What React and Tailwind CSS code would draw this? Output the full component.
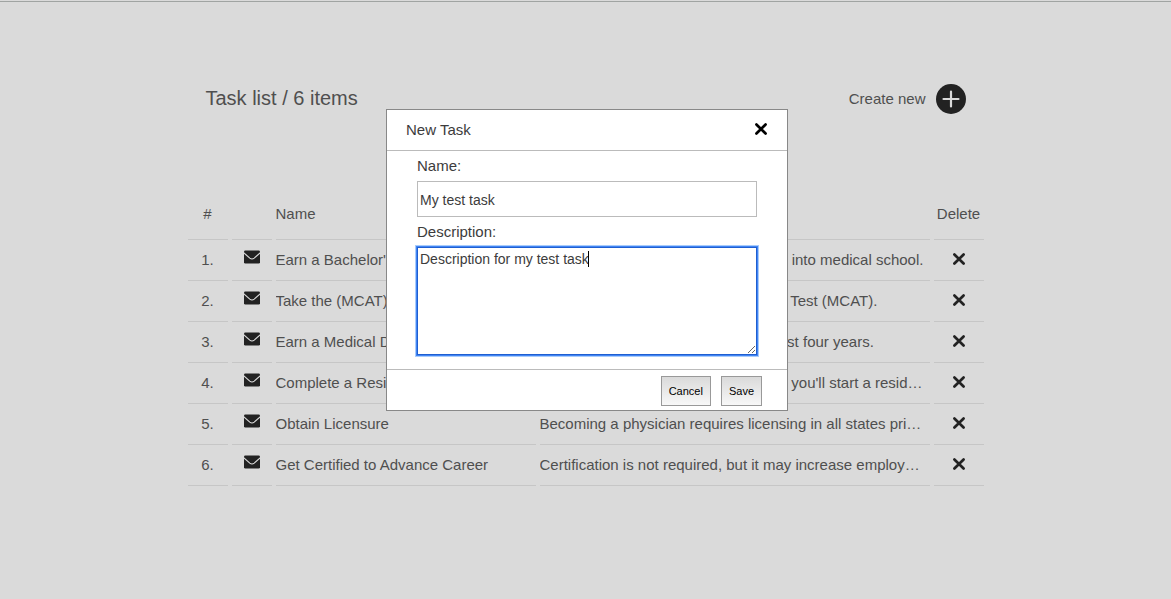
import { useEffect, useRef } from "react";

const tasks = [
  { name: "Earn a Bachelor's Degree", description: "A bachelor's degree is required to get into medical school." },
  { name: "Take the (MCAT)", description: "Study the Medical College Admission Test (MCAT)." },
  { name: "Earn a Medical Degree", description: "Medical school courses require at least four years." },
  { name: "Complete a Residency", description: "Once you finish your medical degree, you'll start a residency program." },
  { name: "Obtain Licensure", description: "Becoming a physician requires licensing in all states prior to practice." },
  { name: "Get Certified to Advance Career", description: "Certification is not required, but it may increase employment options." },
];

function CrossIcon() {
  return (
    <svg viewBox="0 0 12 12" className="size-3 overflow-visible" aria-hidden="true">
      <path d="M1.4 1.5 10.6 10.5M10.6 1.5 1.4 10.5" stroke="currentColor" strokeWidth="2.7" strokeLinecap="round" />
    </svg>
  );
}

function EnvelopeIcon() {
  return (
    <svg viewBox="0 0 16 14" className="h-[14px] w-4" aria-hidden="true">
      <rect y="0.4" width="16" height="13.2" rx="1.4" fill="currentColor" />
      <path d="M-0.5 2.6 5.8 8.1Q8 9.9 10.2 8.1L16.5 2.6" fill="none" stroke="#dadada" strokeWidth="1.2" />
    </svg>
  );
}

function Cell({ children, className = "" }) {
  return <td className={`h-[41px] truncate border-b border-[#c6c6c6] p-0 ${className}`}>{children}</td>;
}

function TaskTable() {
  return (
    <table className="mt-[74px] w-full table-fixed border-separate border-spacing-x-1 border-spacing-y-0 text-[15px]">
      <colgroup>
        <col className="w-10" />
        <col className="w-10" />
        <col className="w-[260px]" />
        <col />
        <col className="w-[50px]" />
      </colgroup>
      <thead>
        <tr>
          <th className="h-[52px] border-b border-[#c6c6c6] px-0 pt-[2px] pb-0 font-normal">#</th>
          <th className="border-b border-[#c6c6c6] p-0" aria-label="Details" />
          <th className="border-b border-[#c6c6c6] px-0 pt-[2px] pb-0 text-left font-normal">Name</th>
          <th className="border-b border-[#c6c6c6] px-0 pt-[2px] pb-0 text-left font-normal">Description</th>
          <th className="border-b border-[#c6c6c6] px-0 pt-[2px] pb-0 font-normal">Delete</th>
        </tr>
      </thead>
      <tbody>
        {tasks.map((task, i) => (
          <tr key={task.name}>
            <Cell className="text-center">{i + 1}.</Cell>
            <Cell>
              <button aria-label="Open task" className="mx-auto mb-[7px] block text-[#222]">
                <EnvelopeIcon />
              </button>
            </Cell>
            <Cell>{task.name}</Cell>
            <Cell className="pr-1">{task.description}</Cell>
            <Cell>
              <button aria-label="Delete task" className="mx-auto mb-[2px] block text-[#222]">
                <CrossIcon />
              </button>
            </Cell>
          </tr>
        ))}
      </tbody>
    </table>
  );
}

function DialogButton({ children }) {
  return (
    <button type="button" className="h-[30px] border border-[#999] bg-linear-to-b from-[#dadada] to-[#f8f8f8] px-[7px] text-[11px] text-black">
      {children}
    </button>
  );
}

function NewTaskDialog() {
  const area = useRef(null);
  useEffect(() => {
    const el = area.current;
    el.focus();
    el.setSelectionRange(el.value.length, el.value.length);
  }, []);
  return (
    <div className="fixed inset-0 flex items-start justify-center pt-[109px] pl-[3px]">
      <form role="dialog" aria-label="New Task" className="w-[402px] border border-[#888] bg-white text-[15px] text-[#3c3c3c]">
        <header className="flex h-[41px] items-center justify-between border-b border-[#bbb] pr-5 pl-[19px]">
          <h2>New Task</h2>
          <button type="button" aria-label="Close" className="pb-[2px] text-black">
            <CrossIcon />
          </button>
        </header>
        <div className="px-[30px] pt-1 pb-[14px]">
          <label htmlFor="task-name" className="block leading-[22px]">Name:</label>
          <input id="task-name" defaultValue="My test task" className="mt-1 block h-9 w-full border border-[#bbb] px-[2px] pt-[2px] text-[14px]" />
          <label htmlFor="task-description" className="mt-1 block leading-[22px]">Description:</label>
          <div className="relative mt-1">
            <textarea
              id="task-description"
              ref={area}
              defaultValue="Description for my test task"
              className="block h-[108px] w-full resize border border-[#1f5fd0] px-[2px] pt-[3px] text-[14px] leading-4 caret-transparent shadow-[0_0_0_1px_#4285f4,0_0_0_2px_#a9ccfb] outline-none"
            />
            <span className="pointer-events-none absolute top-1 left-[171px] h-4 w-px bg-black" />
          </div>
        </div>
        <footer className="flex h-[41px] items-start justify-end gap-[10px] border-t border-[#bbb] px-[25px] pt-[6px]">
          <DialogButton>Cancel</DialogButton>
          <DialogButton>Save</DialogButton>
        </footer>
      </form>
    </div>
  );
}

export default function App() {
  return (
    <div className="min-h-screen bg-[#dadada] pt-px font-['Liberation_Sans',sans-serif] text-[#4f4f4f]">
      <main className="border-t border-[#a0a4a2]">
        <div className="mx-auto max-w-[804px] pt-[82px]">
          <header className="flex h-[30px] items-center justify-between px-[22px]">
            <h1 className="pb-[2px] text-[20px]">Task list / 6 items</h1>
            <button className="flex items-center gap-[10px] text-[15px]">
              Create new
              <svg viewBox="0 0 30 30" className="size-[30px]" aria-hidden="true">
                <circle cx="15" cy="15" r="15" fill="#222" />
                <path d="M15 7.5v15M7.5 15h15" stroke="#dadada" strokeWidth="2.2" strokeLinecap="round" />
              </svg>
            </button>
          </header>
          <TaskTable />
        </div>
      </main>
      <NewTaskDialog />
    </div>
  );
}
